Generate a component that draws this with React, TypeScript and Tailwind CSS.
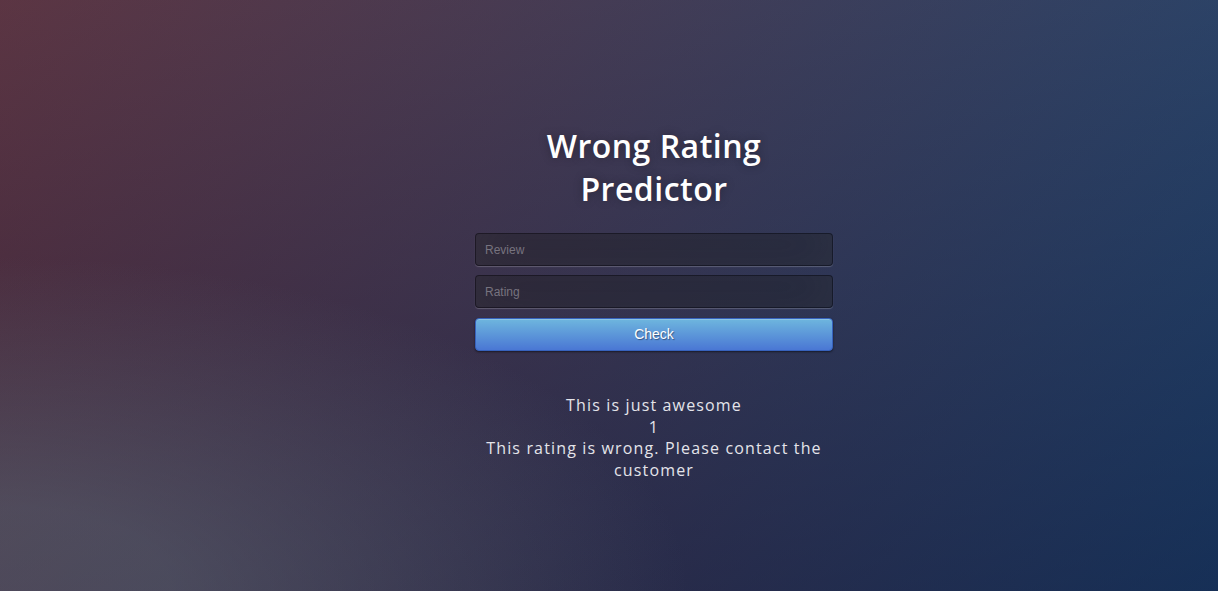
export default function App() {
  return (
    <div className="h-[597px] w-[1225px] overflow-hidden bg-white">
      <div className="h-[591px] w-[1218px] bg-[#092756] [background-image:radial-gradient(ellipse_farthest-corner_at_0%_100%,rgba(104,128,138,0.4)_10%,rgba(138,114,76,0)_40%),linear-gradient(to_bottom,rgba(57,173,219,0.25)_0%,rgba(42,60,87,0.4)_100%),linear-gradient(135deg,#670d10_0%,#092756_100%)]">
        <div className="ml-[475px] flex w-[358px] flex-col pt-[124px]">
          <h1 className="text-center font-['Open_Sans',sans-serif] text-[32px] leading-[43px] font-semibold tracking-[0.5px] text-white [text-shadow:0_0_10px_rgba(0,0,0,0.3)]">
            Wrong Rating
            <br />
            Predictor
          </h1>
          <form className="mt-[23px] flex flex-col gap-[9px]" onSubmit={(e) => e.preventDefault()}>
            <input
              type="text"
              placeholder="Review"
              className="h-[33px] w-full rounded-[4px] border border-[rgba(0,0,0,0.3)] bg-[rgba(0,0,0,0.3)] px-[9px] font-['Liberation_Sans',Arial,sans-serif] text-[12px] text-white shadow-[inset_0_-5px_45px_rgba(100,100,100,0.2),0_1px_1px_rgba(255,255,255,0.2)] outline-none placeholder:text-[#77737f]"
            />
            <input
              type="text"
              placeholder="Rating"
              className="h-[33px] w-full rounded-[4px] border border-[rgba(0,0,0,0.3)] bg-[rgba(0,0,0,0.3)] px-[9px] font-['Liberation_Sans',Arial,sans-serif] text-[12px] text-white shadow-[inset_0_-5px_45px_rgba(100,100,100,0.2),0_1px_1px_rgba(255,255,255,0.2)] outline-none placeholder:text-[#77737f]"
            />
            <button
              type="submit"
              className="mt-[1px] h-[33px] w-full rounded-[4px] border border-[#3762bc] bg-[#4a77d4] bg-[linear-gradient(to_bottom,#6eb6de,#4a77d4)] font-['Liberation_Sans',Arial,sans-serif] text-[14px] text-white shadow-[inset_0_1px_0_rgba(255,255,255,0.2),0_1px_2px_rgba(0,0,0,0.5)] [text-shadow:1px_1px_1px_rgba(0,0,0,0.4)]"
            >
              Check
            </button>
          </form>
          <div className="mt-[44px] text-center font-['Open_Sans',sans-serif] text-[16px] leading-[21.5px] tracking-[1.15px] text-[#e4e4ea]">
            <p>This is just awesome</p>
            <p>1</p>
            <p>This rating is wrong. Please contact the customer</p>
          </div>
        </div>
      </div>
    </div>
  );
}
